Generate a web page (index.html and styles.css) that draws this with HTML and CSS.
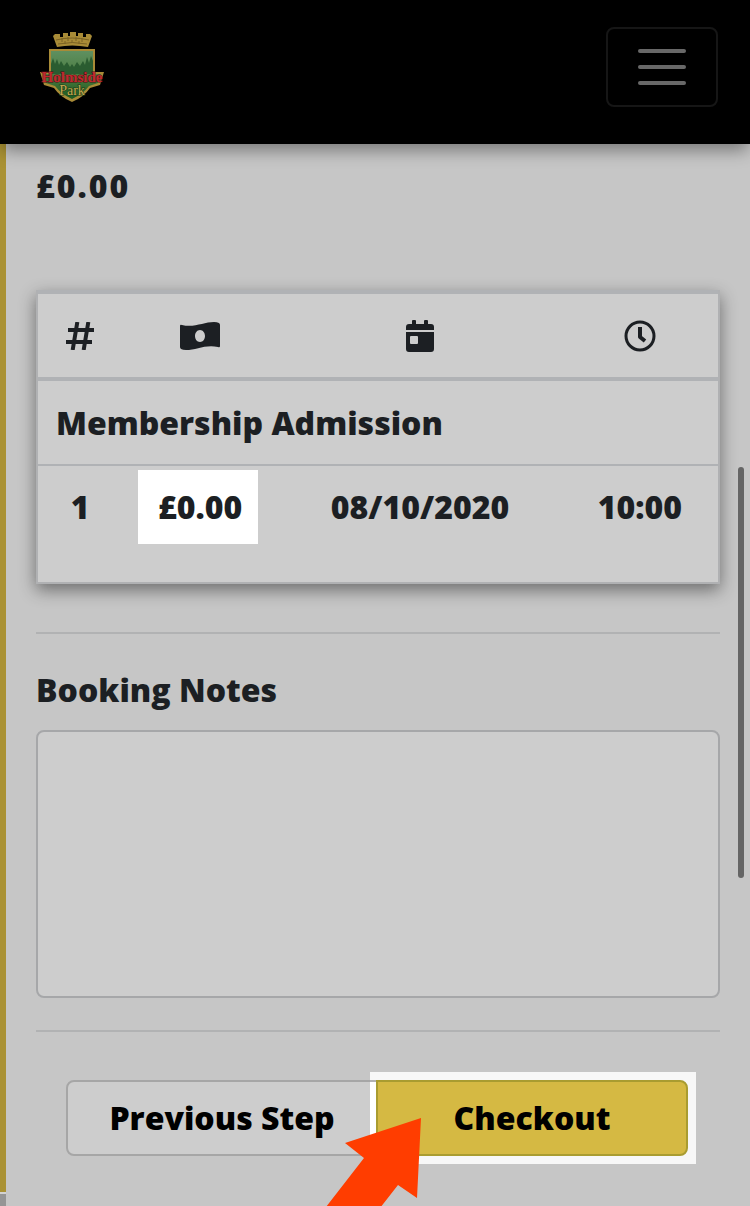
FILE: index.html
```html
<!DOCTYPE html>
<html lang="en">
<head>
    <meta charset="UTF-8">
    <meta name="viewport" content="width=device-width, initial-scale=1.0">
    <title>Holmside Park - Booking</title>
    <link rel="stylesheet" href="styles.css">
</head>
<body>
    <header class="navbar">
        <a href="#" class="brand" aria-label="Holmside Park">
            <svg class="logo" viewBox="0 0 64 72">
                <defs>
                    <linearGradient id="sky" x1="0" y1="0" x2="0" y2="1">
                        <stop offset="0" stop-color="#5f9060"/>
                        <stop offset="0.5" stop-color="#4b7c40"/>
                        <stop offset="1" stop-color="#1d5a20"/>
                    </linearGradient>
                </defs>
                <!-- crown -->
                <path d="M17 16L13 5L15 3H20V6H23V2H28V5H30V1H36V5H38V2H43V6H46V3H50L52 5L48 16Q32 13 17 16Z" fill="#a88b37"/>
                <path d="M16 9Q32 5 49 9M18 13Q32 10 47 13M22 7V11M28 6V10M36 6V10M42 7V11M25 10V13M32 9V12M39 10V13" stroke="#7a6224" fill="none"/>
                <!-- shield -->
                <path d="M9 18H55V41L64 41L60 54L50 57Q44 66 32 71Q20 66 14 57L4 54L0 41L9 41Z" fill="#a88b37"/>
                <path d="M11 20H53V43L61 43L58 52L49 55Q43 63 32 68Q21 63 15 55L6 52L3 43L11 43Z" fill="url(#sky)"/>
                <path d="M11 43V33L13 27L15 33L17 28L19 34L21 30L24 35L27 31L30 36L32 33L34 36L37 31L40 35L43 30L45 34L47 26L49 32L51 25L53 30V43Z" fill="#2a5c30"/>
                <text x="32" y="51" class="logo-name">Holmside</text>
                <text x="32" y="64" class="logo-park">Park</text>
            </svg>
        </a>
        <button type="button" class="toggler" aria-label="Toggle navigation">
            <span></span>
            <span></span>
            <span></span>
        </button>
    </header>

    <main class="panel">
        <p class="total">£0.00</p>

        <div class="card">
            <table class="tickets">
                <colgroup>
                    <col class="col-count">
                    <col class="col-price">
                    <col class="col-date">
                    <col class="col-time">
                </colgroup>
                <thead>
                    <tr>
                        <th aria-label="Quantity">
                            <svg class="icon" width="28" height="28" viewBox="0 0 28 28">
                                <path d="M11 2L7 26M22 2L18 26M4 8H26M2 20H24" stroke="currentColor" stroke-width="4" stroke-linecap="square" fill="none"/>
                            </svg>
                        </th>
                        <th aria-label="Price">
                            <svg class="icon" width="40" height="28" viewBox="0 0 40 28">
                                <path fill="currentColor" fill-rule="evenodd" d="M0 4Q0 2 2 3C14 6 24 0 34 0Q37 0 39 1Q40 2 40 3V24Q40 26 38 25C26 22 16 28 6 28Q3 28 1 27Q0 26 0 25ZM20 8C17 8 15 11 15 14S17 20 20 20S25 17 25 14S23 8 20 8Z"/>
                            </svg>
                        </th>
                        <th aria-label="Date">
                            <svg class="icon" width="28" height="32" viewBox="0 0 28 32">
                                <path fill="currentColor" fill-rule="evenodd" d="M0 10V7Q0 4 3 4H6V1Q6 0 7 0H9Q10 0 10 1V4H18V1Q18 0 19 0H21Q22 0 22 1V4H25Q28 4 28 7V10ZM0 12H28V29Q28 32 25 32H3Q0 32 0 29ZM5 16Q4 16 4 17V23Q4 24 5 24H11Q12 24 12 23V17Q12 16 11 16Z"/>
                            </svg>
                        </th>
                        <th aria-label="Time">
                            <svg class="icon" width="32" height="32" viewBox="0 0 32 32" fill="none" stroke="currentColor">
                                <circle cx="16" cy="16" r="14" stroke-width="3"/>
                                <path d="M16 7V17L21 21" stroke-width="4" stroke-linejoin="round"/>
                            </svg>
                        </th>
                    </tr>
                </thead>
                <tbody>
                    <tr>
                        <td colspan="4" class="ticket-name">Membership Admission</td>
                    </tr>
                    <tr>
                        <td>1</td>
                        <td><span class="price-spot">£0.00</span></td>
                        <td>08/10/2020</td>
                        <td>10:00</td>
                    </tr>
                </tbody>
            </table>
        </div>

        <hr>

        <label for="notes">Booking Notes</label>
        <textarea id="notes"></textarea>

        <hr>

        <div class="steps">
            <button type="button" class="btn btn-previous">Previous Step</button>
            <div class="checkout-spot">
                <button type="button" class="btn btn-checkout">Checkout</button>
            </div>
            <svg class="arrow" width="96" height="90" viewBox="0 0 96 90">
                <path d="M95 0L19 25L38 40L0 89V90H54L72 67L91 80Z" fill="#ff3d00"/>
            </svg>
        </div>
    </main>
    <div class="next-panel"></div>
    <div class="scroll-thumb"></div>
</body>
</html>
```
FILE: styles.css
```css
* {
    box-sizing: border-box;
}

body {
    position: relative;
    min-height: 100vh;
    margin: 0;
    overflow: hidden;
    background-color: #c6c6c6;
    color: #1c1f23;
    font-family: "Open Sans", sans-serif;
    font-size: 32px;
    font-weight: 800;
    line-height: 48px;
}

.navbar {
    position: relative;
    display: flex;
    justify-content: space-between;
    align-items: center;
    height: 144px;
    padding: 0 32px 10px 40px;
    background-color: #000;
    box-shadow: 0 8px 16px -2px rgba(0, 0, 0, 0.4);
}

.brand,
.logo,
.icon {
    display: block;
}

.logo {
    width: 64px;
    height: 72px;
}

.logo-name,
.logo-park {
    font-family: "Liberation Serif", serif;
    font-weight: 700;
    text-anchor: middle;
    paint-order: stroke;
}

.logo-name {
    font-size: 15px;
    fill: #c0292f;
    stroke: #4c0e10;
    stroke-width: 1px;
}

.logo-park {
    font-size: 14px;
    font-weight: 400;
    fill: #c9a94f;
    stroke: #173d18;
    stroke-width: 1px;
}

.toggler {
    display: flex;
    flex-direction: column;
    justify-content: center;
    align-items: center;
    gap: 12px;
    width: 112px;
    height: 80px;
    padding: 0;
    border: 2px solid #161616;
    border-radius: 8px;
    background-color: transparent;
}

.toggler span {
    width: 48px;
    height: 4px;
    border-radius: 2px;
    background-color: #686868;
}

.panel {
    padding: 18px 30px 36px;
    border-left: 6px solid #aa9234;
}

.total {
    margin: 0 0 80px;
    letter-spacing: 2px;
}

.card {
    height: 294px;
    border: 2px solid #b0b1b3;
    border-top: none;
    background-color: #cdcdcd;
    box-shadow: 0 6px 16px rgba(0, 0, 0, 0.45);
}

.tickets {
    width: 100%;
    table-layout: fixed;
    border-spacing: 0;
}

.col-count {
    width: 84px;
}

.col-price,
.col-time {
    width: 23%;
}

.tickets th {
    height: 91px;
    padding: 0;
    border-top: 4px solid #b0b2b5;
    border-bottom: 4px solid #b0b2b5;
}

.tickets th .icon {
    margin: 0 auto;
}

.tickets td {
    padding: 4px 0;
    text-align: center;
}

.tickets .ticket-name {
    height: 85px;
    padding: 0 18px;
    border-bottom: 2px solid #b0b2b5;
    text-align: left;
}

.price-spot {
    display: block;
    width: 120px;
    margin-left: 16px;
    padding: 13px 0 13px 4px;
    background-color: #fff;
}

hr {
    height: 2px;
    margin: 48px 0 32px;
    border: none;
    background-color: #b1b2b3;
}

label {
    display: block;
    margin-bottom: 16px;
}

textarea {
    display: block;
    width: 100%;
    height: 268px;
    padding: 12px 24px;
    border: 2px solid #a6a7a9;
    border-radius: 8px;
    background-color: #cdcdcd;
    font: inherit;
    resize: none;
}

textarea + hr {
    margin: 32px 0 48px;
}

.steps {
    position: relative;
    display: flex;
    padding: 0 32px 0 30px;
}

.btn {
    width: 100%;
    height: 76px;
    padding: 0;
    border: 2px solid #a6a6a6;
    background-color: #cdcdcd;
    color: #000;
    font: inherit;
}

.btn-previous {
    flex: 1 1 50%;
    border-radius: 8px 0 0 8px;
}

.checkout-spot {
    position: relative;
    flex: 1 1 50%;
    margin-left: -2px;
}

/* lit area around the checkout button */
.checkout-spot::before {
    content: "";
    position: absolute;
    inset: -8px -8px -8px -6px;
    background-color: #f7f7f7;
}

/* end of the previous button inside the lit area */
.checkout-spot::after {
    content: "";
    position: absolute;
    top: 0;
    bottom: 0;
    left: -6px;
    width: 6px;
    border: solid #b2b2b2;
    border-width: 2px 0;
    background-color: #fff;
}

.btn-checkout {
    position: relative;
    border-color: #a99c30;
    border-radius: 0 8px 8px 0;
    background-color: #d5b943;
}

.arrow {
    position: absolute;
    top: 38px;
    left: 290px;
}

.next-panel {
    width: 6px;
    height: 14px;
    border-top: 2px solid #d2d2d2;
    background-color: #959595;
}

.scroll-thumb {
    position: absolute;
    top: 467px;
    right: 6px;
    width: 6px;
    height: 411px;
    border-radius: 3px;
    background-color: #656565;
}
```
